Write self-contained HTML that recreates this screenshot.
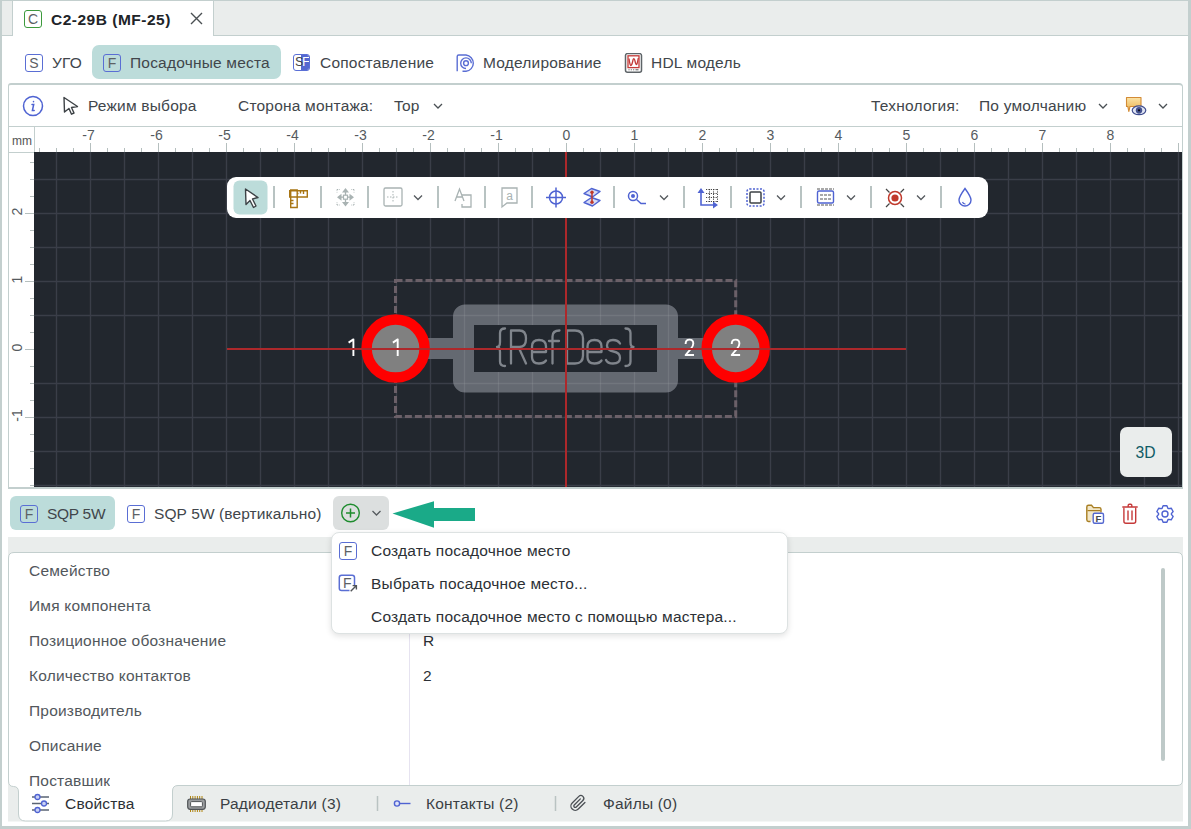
<!DOCTYPE html>
<html><head><meta charset="utf-8">
<style>
*{box-sizing:border-box;margin:0;padding:0}
html,body{width:1191px;height:829px;overflow:hidden;background:#fff}
body{position:relative;font-family:"Liberation Sans",sans-serif;color:#41464b;font-size:15px}
.a{position:absolute}
.t{position:absolute;white-space:nowrap;line-height:1;font-size:15.5px;letter-spacing:0.2px}
.ic{position:absolute;border:1.7px solid #5a6ed4;border-radius:3px;font-size:14px;line-height:14px;text-align:center;color:#5d6165;display:flex;align-items:center;justify-content:center;padding-top:0}
</style></head><body>
<!-- page border -->
<div class="a" style="left:0;top:0;width:1191px;height:829px;border-left:2px solid #c3cfce;border-top:1px solid #c3cfce;border-right:3px solid #c3cfce;border-bottom:3px solid #c3cfce"></div>
<!-- tab strip -->
<div class="a" style="left:2px;top:1px;width:1186px;height:35px;background:#eaedec;border-bottom:1px solid #c3cfce"></div>
<div class="a" style="left:12px;top:1px;width:202px;height:35px;background:#fff;border-left:1px solid #c3cfce;border-right:1px solid #c3cfce"></div>
<div class="ic" style="left:24px;top:10px;width:18px;height:18px;border-color:#3c9a3c">C</div>
<div class="t" style="left:51px;top:12px;font-weight:bold;color:#202428;letter-spacing:0.5px">C2-29B (MF-25)</div>
<svg class="a" style="left:190px;top:12px" width="13" height="13" viewBox="0 0 13 13"><path d="M1 1L12 12M12 1L1 12" stroke="#4a4f52" stroke-width="1.4"/></svg>

<!-- nav row -->
<div class="ic" style="left:25px;top:54px;width:18px;height:18px">S</div>
<div class="t" style="left:52px;top:55px">УГО</div>
<div class="a" style="left:92px;top:45px;width:189px;height:34px;background:#bcdcda;border-radius:7px"></div>
<div class="ic" style="left:103px;top:54px;width:18px;height:18px">F</div>
<div class="t" style="left:130px;top:55px">Посадочные места</div>
<div class="a" style="left:293px;top:54px;width:17px;height:17px;border:1.5px solid #5a6fd6;border-radius:3px;overflow:hidden"><div class="a" style="left:7px;top:0;width:9px;height:15px;background:#5468d0"></div><div class="a" style="left:1px;top:0;font-size:13px;line-height:14px;color:#444">S</div><div class="a" style="left:8px;top:0;font-size:13px;line-height:14px;color:#fff">F</div></div>
<div class="t" style="left:320px;top:55px">Сопоставление</div>
<svg class="a" style="left:455px;top:53px" width="21" height="20" viewBox="0 0 21 20" fill="none" stroke="#5a6ed4" stroke-width="1.4"><path d="M2.2 18.3V3.5Q2.2 2 3.7 2H11a8.2 8.2 0 0 1 0 16.3H7.5"/><path d="M11 15.5a5.3 5.3 0 1 1 5.3 -5.3"/><circle cx="11" cy="10.2" r="2.4"/></svg>
<div class="t" style="left:483px;top:55px">Моделирование</div>
<svg class="a" style="left:623.5px;top:53px" width="19" height="20" viewBox="0 0 19 20"><rect x="1.5" y="0.6" width="16" height="18.6" rx="2" fill="#fff" stroke="#5e6468" stroke-width="1.5"/><rect x="4" y="2.8" width="11" height="11.8" fill="#fff" stroke="#c43a38" stroke-width="1.3"/><path d="M5 5.5Q6 13 7 12.5Q8 12 9 7Q10 4 11 8Q12 13 13 11Q13.8 8 14.3 5" fill="none" stroke="#c43a38" stroke-width="1.3"/><path d="M4.5 16.8h1M6.8 16.8h1M9.2 16.8h1M11.5 16.8h3" stroke="#555" stroke-width="1"/></svg>
<div class="t" style="left:651px;top:55px">HDL модель</div>

<!-- main panel -->
<div class="a" style="left:8px;top:83px;width:1175px;height:406px;border:1px solid #c3cfce;border-top-width:2px;border-bottom-width:2px;border-radius:3px 4px 0 0"></div>
<!-- toolbar row -->
<svg class="a" style="left:22px;top:95px" width="22" height="22" viewBox="0 0 22 22" fill="none" stroke="#4f63d2" stroke-width="1.5"><circle cx="11" cy="11" r="9.5"/><path d="M11.5 6.5v0.3M10 9.5h1.7l-1.3 6h1.8" stroke-linecap="round"/></svg>
<svg class="a" style="left:62px;top:96px" width="18" height="20" viewBox="0 0 18 20"><path d="M2 1.5L15.5 10.5L9.5 11.5L12 17L9.5 18.2L7 12.5L2.5 16Z" fill="#fff" stroke="#3d4246" stroke-width="1.4" stroke-linejoin="round"/></svg>
<div class="t" style="left:88px;top:98px">Режим выбора</div>
<div class="t" style="left:238px;top:98px">Сторона монтажа:</div>
<div class="t" style="left:394px;top:98px">Top</div>
<svg class="a" style="left:433px;top:102px" width="10" height="8" viewBox="0 0 10 8"><path d="M1 2L5 6L9 2" fill="none" stroke="#4a5054" stroke-width="1.3"/></svg>
<div class="t" style="left:871px;top:98px">Технология:</div>
<div class="t" style="left:979px;top:98px">По умолчанию</div>
<svg class="a" style="left:1098px;top:102px" width="10" height="8" viewBox="0 0 10 8"><path d="M1 2L5 6L9 2" fill="none" stroke="#4a5054" stroke-width="1.3"/></svg>
<svg class="a" style="left:1124px;top:96px" width="24" height="20" viewBox="0 0 24 20"><defs><linearGradient id="yg" x1="0" y1="0" x2="0" y2="1"><stop offset="0" stop-color="#fbe3a6"/><stop offset="1" stop-color="#eab04a"/></linearGradient></defs><path d="M2.5 1.5H17V10.5H6L4.8 15.5L3.8 10.5H2.5Z" fill="url(#yg)" stroke="#d38b36" stroke-width="1.1" stroke-linejoin="round"/><ellipse cx="15" cy="14.3" rx="6.8" ry="4.4" fill="#dfe4f3" stroke="#3e4c8e" stroke-width="1.2"/><ellipse cx="15" cy="14.3" rx="3.2" ry="3.4" fill="#44528f"/><circle cx="15" cy="14.3" r="1.1" fill="#0c0c18"/></svg>
<svg class="a" style="left:1157.5px;top:102px" width="10" height="8" viewBox="0 0 10 8"><path d="M1 2L5 6L9 2" fill="none" stroke="#4a5054" stroke-width="1.3"/></svg>

<!-- rulers -->
<svg class="a" style="left:0;top:0" width="1191" height="829">
<line x1="9" y1="126.5" x2="1182" y2="126.5" stroke="#c3cfce" stroke-width="1"/>
<line x1="34.5" y1="126" x2="34.5" y2="488" stroke="#c3cfce" stroke-width="1"/>
<line x1="9" y1="152.5" x2="34" y2="152.5" stroke="#c3cfce" stroke-width="1"/>
<g stroke="#b9c4c3" stroke-width="1">

</g>
<g stroke="#b5bfbe" stroke-width="1">
<line x1="39.5" y1="148" x2="39.5" y2="152"/>
<line x1="56.5" y1="148" x2="56.5" y2="152"/>
<line x1="73.5" y1="148" x2="73.5" y2="152"/>
<line x1="90.5" y1="143" x2="90.5" y2="152"/>
<!-- x="88.5" y="140" text-anchor="middle">-7-->
<line x1="107.5" y1="148" x2="107.5" y2="152"/>
<line x1="124.5" y1="148" x2="124.5" y2="152"/>
<line x1="141.5" y1="148" x2="141.5" y2="152"/>
<line x1="158.5" y1="143" x2="158.5" y2="152"/>
<!-- x="156.5" y="140" text-anchor="middle">-6-->
<line x1="175.5" y1="148" x2="175.5" y2="152"/>
<line x1="192.5" y1="148" x2="192.5" y2="152"/>
<line x1="209.5" y1="148" x2="209.5" y2="152"/>
<line x1="226.5" y1="143" x2="226.5" y2="152"/>
<!-- x="224.5" y="140" text-anchor="middle">-5-->
<line x1="243.5" y1="148" x2="243.5" y2="152"/>
<line x1="260.5" y1="148" x2="260.5" y2="152"/>
<line x1="277.5" y1="148" x2="277.5" y2="152"/>
<line x1="294.5" y1="143" x2="294.5" y2="152"/>
<!-- x="292.5" y="140" text-anchor="middle">-4-->
<line x1="311.5" y1="148" x2="311.5" y2="152"/>
<line x1="328.5" y1="148" x2="328.5" y2="152"/>
<line x1="345.5" y1="148" x2="345.5" y2="152"/>
<line x1="362.5" y1="143" x2="362.5" y2="152"/>
<!-- x="360.5" y="140" text-anchor="middle">-3-->
<line x1="379.5" y1="148" x2="379.5" y2="152"/>
<line x1="396.5" y1="148" x2="396.5" y2="152"/>
<line x1="413.5" y1="148" x2="413.5" y2="152"/>
<line x1="430.5" y1="143" x2="430.5" y2="152"/>
<!-- x="428.5" y="140" text-anchor="middle">-2-->
<line x1="447.5" y1="148" x2="447.5" y2="152"/>
<line x1="464.5" y1="148" x2="464.5" y2="152"/>
<line x1="481.5" y1="148" x2="481.5" y2="152"/>
<line x1="498.5" y1="143" x2="498.5" y2="152"/>
<!-- x="496.5" y="140" text-anchor="middle">-1-->
<line x1="515.5" y1="148" x2="515.5" y2="152"/>
<line x1="532.5" y1="148" x2="532.5" y2="152"/>
<line x1="549.5" y1="148" x2="549.5" y2="152"/>
<line x1="566.5" y1="143" x2="566.5" y2="152"/>
<!-- x="566.5" y="140" text-anchor="middle">0-->
<line x1="583.5" y1="148" x2="583.5" y2="152"/>
<line x1="600.5" y1="148" x2="600.5" y2="152"/>
<line x1="617.5" y1="148" x2="617.5" y2="152"/>
<line x1="634.5" y1="143" x2="634.5" y2="152"/>
<!-- x="634.5" y="140" text-anchor="middle">1-->
<line x1="651.5" y1="148" x2="651.5" y2="152"/>
<line x1="668.5" y1="148" x2="668.5" y2="152"/>
<line x1="685.5" y1="148" x2="685.5" y2="152"/>
<line x1="702.5" y1="143" x2="702.5" y2="152"/>
<!-- x="702.5" y="140" text-anchor="middle">2-->
<line x1="719.5" y1="148" x2="719.5" y2="152"/>
<line x1="736.5" y1="148" x2="736.5" y2="152"/>
<line x1="753.5" y1="148" x2="753.5" y2="152"/>
<line x1="770.5" y1="143" x2="770.5" y2="152"/>
<!-- x="770.5" y="140" text-anchor="middle">3-->
<line x1="787.5" y1="148" x2="787.5" y2="152"/>
<line x1="804.5" y1="148" x2="804.5" y2="152"/>
<line x1="821.5" y1="148" x2="821.5" y2="152"/>
<line x1="838.5" y1="143" x2="838.5" y2="152"/>
<!-- x="838.5" y="140" text-anchor="middle">4-->
<line x1="855.5" y1="148" x2="855.5" y2="152"/>
<line x1="872.5" y1="148" x2="872.5" y2="152"/>
<line x1="889.5" y1="148" x2="889.5" y2="152"/>
<line x1="906.5" y1="143" x2="906.5" y2="152"/>
<!-- x="906.5" y="140" text-anchor="middle">5-->
<line x1="923.5" y1="148" x2="923.5" y2="152"/>
<line x1="940.5" y1="148" x2="940.5" y2="152"/>
<line x1="957.5" y1="148" x2="957.5" y2="152"/>
<line x1="974.5" y1="143" x2="974.5" y2="152"/>
<!-- x="974.5" y="140" text-anchor="middle">6-->
<line x1="991.5" y1="148" x2="991.5" y2="152"/>
<line x1="1008.5" y1="148" x2="1008.5" y2="152"/>
<line x1="1025.5" y1="148" x2="1025.5" y2="152"/>
<line x1="1042.5" y1="143" x2="1042.5" y2="152"/>
<!-- x="1042.5" y="140" text-anchor="middle">7-->
<line x1="1059.5" y1="148" x2="1059.5" y2="152"/>
<line x1="1076.5" y1="148" x2="1076.5" y2="152"/>
<line x1="1093.5" y1="148" x2="1093.5" y2="152"/>
<line x1="1110.5" y1="143" x2="1110.5" y2="152"/>
<!-- x="1110.5" y="140" text-anchor="middle">8-->
<line x1="1127.5" y1="148" x2="1127.5" y2="152"/>
<line x1="1144.5" y1="148" x2="1144.5" y2="152"/>
<line x1="1161.5" y1="148" x2="1161.5" y2="152"/>
<line x1="1178.5" y1="143" x2="1178.5" y2="152"/>
<line x1="30" y1="162.5" x2="34" y2="162.5"/>
<line x1="30" y1="179.5" x2="34" y2="179.5"/>
<line x1="30" y1="196.5" x2="34" y2="196.5"/>
<line x1="25" y1="213.5" x2="34" y2="213.5"/>
<!-- transform="translate(22,211.5) rotate(-90)" text-anchor="middle">2-->
<line x1="30" y1="230.5" x2="34" y2="230.5"/>
<line x1="30" y1="247.5" x2="34" y2="247.5"/>
<line x1="30" y1="264.5" x2="34" y2="264.5"/>
<line x1="25" y1="281.5" x2="34" y2="281.5"/>
<!-- transform="translate(22,279.5) rotate(-90)" text-anchor="middle">1-->
<line x1="30" y1="298.5" x2="34" y2="298.5"/>
<line x1="30" y1="315.5" x2="34" y2="315.5"/>
<line x1="30" y1="332.5" x2="34" y2="332.5"/>
<line x1="25" y1="349.5" x2="34" y2="349.5"/>
<!-- transform="translate(22,347.5) rotate(-90)" text-anchor="middle">0-->
<line x1="30" y1="366.5" x2="34" y2="366.5"/>
<line x1="30" y1="383.5" x2="34" y2="383.5"/>
<line x1="30" y1="400.5" x2="34" y2="400.5"/>
<line x1="25" y1="417.5" x2="34" y2="417.5"/>
<!-- transform="translate(22,415.5) rotate(-90)" text-anchor="middle">-1-->
<line x1="30" y1="434.5" x2="34" y2="434.5"/>
<line x1="30" y1="451.5" x2="34" y2="451.5"/>
<line x1="30" y1="468.5" x2="34" y2="468.5"/>
<line x1="30" y1="485.5" x2="34" y2="485.5"/>
</g>
<g font-family="Liberation Sans" font-size="14" fill="#555a5e" stroke="none">
<text x="88.5" y="140" text-anchor="middle">-7</text><text x="156.5" y="140" text-anchor="middle">-6</text><text x="224.5" y="140" text-anchor="middle">-5</text><text x="292.5" y="140" text-anchor="middle">-4</text><text x="360.5" y="140" text-anchor="middle">-3</text><text x="428.5" y="140" text-anchor="middle">-2</text><text x="496.5" y="140" text-anchor="middle">-1</text><text x="566.5" y="140" text-anchor="middle">0</text><text x="634.5" y="140" text-anchor="middle">1</text><text x="702.5" y="140" text-anchor="middle">2</text><text x="770.5" y="140" text-anchor="middle">3</text><text x="838.5" y="140" text-anchor="middle">4</text><text x="906.5" y="140" text-anchor="middle">5</text><text x="974.5" y="140" text-anchor="middle">6</text><text x="1042.5" y="140" text-anchor="middle">7</text><text x="1110.5" y="140" text-anchor="middle">8</text>
<text transform="translate(22,211.5) rotate(-90)" text-anchor="middle">2</text><text transform="translate(22,279.5) rotate(-90)" text-anchor="middle">1</text><text transform="translate(22,347.5) rotate(-90)" text-anchor="middle">0</text><text transform="translate(22,415.5) rotate(-90)" text-anchor="middle">-1</text>
</g>
<text x="12" y="145" font-family="Liberation Sans" font-size="12" fill="#555">mm</text>
<rect x="34" y="152" width="1148" height="335" fill="#22272e"/>
<g stroke="#3a3e48" stroke-width="1.4">
<line x1="56.5" y1="152" x2="56.5" y2="487"/>
<line x1="90.5" y1="152" x2="90.5" y2="487"/>
<line x1="124.5" y1="152" x2="124.5" y2="487"/>
<line x1="158.5" y1="152" x2="158.5" y2="487"/>
<line x1="192.5" y1="152" x2="192.5" y2="487"/>
<line x1="226.5" y1="152" x2="226.5" y2="487"/>
<line x1="260.5" y1="152" x2="260.5" y2="487"/>
<line x1="294.5" y1="152" x2="294.5" y2="487"/>
<line x1="328.5" y1="152" x2="328.5" y2="487"/>
<line x1="362.5" y1="152" x2="362.5" y2="487"/>
<line x1="396.5" y1="152" x2="396.5" y2="487"/>
<line x1="430.5" y1="152" x2="430.5" y2="487"/>
<line x1="464.5" y1="152" x2="464.5" y2="487"/>
<line x1="498.5" y1="152" x2="498.5" y2="487"/>
<line x1="532.5" y1="152" x2="532.5" y2="487"/>
<line x1="600.5" y1="152" x2="600.5" y2="487"/>
<line x1="634.5" y1="152" x2="634.5" y2="487"/>
<line x1="668.5" y1="152" x2="668.5" y2="487"/>
<line x1="702.5" y1="152" x2="702.5" y2="487"/>
<line x1="736.5" y1="152" x2="736.5" y2="487"/>
<line x1="770.5" y1="152" x2="770.5" y2="487"/>
<line x1="804.5" y1="152" x2="804.5" y2="487"/>
<line x1="838.5" y1="152" x2="838.5" y2="487"/>
<line x1="872.5" y1="152" x2="872.5" y2="487"/>
<line x1="906.5" y1="152" x2="906.5" y2="487"/>
<line x1="940.5" y1="152" x2="940.5" y2="487"/>
<line x1="974.5" y1="152" x2="974.5" y2="487"/>
<line x1="1008.5" y1="152" x2="1008.5" y2="487"/>
<line x1="1042.5" y1="152" x2="1042.5" y2="487"/>
<line x1="1076.5" y1="152" x2="1076.5" y2="487"/>
<line x1="1110.5" y1="152" x2="1110.5" y2="487"/>
<line x1="1144.5" y1="152" x2="1144.5" y2="487"/>
<line x1="1178.5" y1="152" x2="1178.5" y2="487"/>
<line x1="34" y1="179.5" x2="1182" y2="179.5"/>
<line x1="34" y1="213.5" x2="1182" y2="213.5"/>
<line x1="34" y1="247.5" x2="1182" y2="247.5"/>
<line x1="34" y1="281.5" x2="1182" y2="281.5"/>
<line x1="34" y1="315.5" x2="1182" y2="315.5"/>
<line x1="34" y1="383.5" x2="1182" y2="383.5"/>
<line x1="34" y1="417.5" x2="1182" y2="417.5"/>
<line x1="34" y1="451.5" x2="1182" y2="451.5"/>
<line x1="34" y1="485.5" x2="1182" y2="485.5"/>
</g>
<line x1="566" y1="152" x2="566" y2="487" stroke="#c0292b" stroke-width="2"/>
<line x1="227" y1="349" x2="906" y2="349" stroke="#c0292b" stroke-width="2"/>
</svg>

<!-- canvas content -->
<svg class="a" style="left:0;top:0" width="1191" height="829">
<defs><clipPath id="cv"><rect x="34" y="152" width="1148" height="335"/></clipPath></defs>
<g clip-path="url(#cv)">
<rect x="395.5" y="280.5" width="340.2" height="136" fill="none" stroke="#6b6068" stroke-width="3" stroke-dasharray="7 3" stroke-linecap="butt"/>
<path fill-rule="evenodd" fill="#6a6f77" fill-opacity="0.92" d="M465 304.5H666a12 12 0 0 1 12 12V380.5a12 12 0 0 1 -12 12H465a12 12 0 0 1 -12 -12V316.5a12 12 0 0 1 12 -12Z M474 325V372H657V325Z"/>
<rect x="474" y="325" width="183" height="47" fill="#22272e"/>
<clipPath id="bc"><path clip-rule="evenodd" d="M465 304.5H666a12 12 0 0 1 12 12V380.5a12 12 0 0 1 -12 12H465a12 12 0 0 1 -12 -12V316.5a12 12 0 0 1 12 -12Z M474 325V372H657V325Z"/><rect x="420" y="338" width="33" height="21"/><rect x="678" y="338" width="33" height="21"/></clipPath>
<g clip-path="url(#bc)" stroke="#fff" stroke-opacity="0.075" stroke-width="1.3"><line x1="56.5" y1="152" x2="56.5" y2="487"/>
<line x1="90.5" y1="152" x2="90.5" y2="487"/>
<line x1="124.5" y1="152" x2="124.5" y2="487"/>
<line x1="158.5" y1="152" x2="158.5" y2="487"/>
<line x1="192.5" y1="152" x2="192.5" y2="487"/>
<line x1="226.5" y1="152" x2="226.5" y2="487"/>
<line x1="260.5" y1="152" x2="260.5" y2="487"/>
<line x1="294.5" y1="152" x2="294.5" y2="487"/>
<line x1="328.5" y1="152" x2="328.5" y2="487"/>
<line x1="362.5" y1="152" x2="362.5" y2="487"/>
<line x1="396.5" y1="152" x2="396.5" y2="487"/>
<line x1="430.5" y1="152" x2="430.5" y2="487"/>
<line x1="464.5" y1="152" x2="464.5" y2="487"/>
<line x1="498.5" y1="152" x2="498.5" y2="487"/>
<line x1="532.5" y1="152" x2="532.5" y2="487"/>
<line x1="600.5" y1="152" x2="600.5" y2="487"/>
<line x1="634.5" y1="152" x2="634.5" y2="487"/>
<line x1="668.5" y1="152" x2="668.5" y2="487"/>
<line x1="702.5" y1="152" x2="702.5" y2="487"/>
<line x1="736.5" y1="152" x2="736.5" y2="487"/>
<line x1="770.5" y1="152" x2="770.5" y2="487"/>
<line x1="804.5" y1="152" x2="804.5" y2="487"/>
<line x1="838.5" y1="152" x2="838.5" y2="487"/>
<line x1="872.5" y1="152" x2="872.5" y2="487"/>
<line x1="906.5" y1="152" x2="906.5" y2="487"/>
<line x1="940.5" y1="152" x2="940.5" y2="487"/>
<line x1="974.5" y1="152" x2="974.5" y2="487"/>
<line x1="1008.5" y1="152" x2="1008.5" y2="487"/>
<line x1="1042.5" y1="152" x2="1042.5" y2="487"/>
<line x1="1076.5" y1="152" x2="1076.5" y2="487"/>
<line x1="1110.5" y1="152" x2="1110.5" y2="487"/>
<line x1="1144.5" y1="152" x2="1144.5" y2="487"/>
<line x1="1178.5" y1="152" x2="1178.5" y2="487"/>
<line x1="34" y1="179.5" x2="1182" y2="179.5"/>
<line x1="34" y1="213.5" x2="1182" y2="213.5"/>
<line x1="34" y1="247.5" x2="1182" y2="247.5"/>
<line x1="34" y1="281.5" x2="1182" y2="281.5"/>
<line x1="34" y1="315.5" x2="1182" y2="315.5"/>
<line x1="34" y1="383.5" x2="1182" y2="383.5"/>
<line x1="34" y1="417.5" x2="1182" y2="417.5"/>
<line x1="34" y1="451.5" x2="1182" y2="451.5"/>
<line x1="34" y1="485.5" x2="1182" y2="485.5"/></g>
<rect x="420" y="338" width="33" height="21" fill="#6a6f77" fill-opacity="0.92"/>
<rect x="678" y="338" width="33" height="21" fill="#6a6f77" fill-opacity="0.92"/>
<circle cx="395.6" cy="348.6" r="29" fill="#808080" stroke="#ff0000" stroke-width="10.5"/>
<circle cx="735.7" cy="348.5" r="29" fill="#808080" stroke="#ff0000" stroke-width="10.5"/>
<g fill="none" stroke="#80858c" stroke-width="2.3" stroke-linecap="round" stroke-linejoin="round">
<path d="M505 328.5Q500 328.5 500 333V342Q500 347 497 347Q500 347 500 352V361.5Q500 366 505 366"/>
<path d="M511 363.5V330.5H519.5Q526 330.5 526 338.8Q526 347 519.5 347H511M518.5 347L526 363.5"/>
<path d="M532 352H546V346.5Q546 340 539 340Q532 340 532 346.5V357Q532 363.5 539 363.5Q544 363.5 546 360.5"/>
<path d="M559.5 330.5Q552.5 330.5 552.5 336.5V363.5M549 341H559"/>
<path d="M567 330.5V363.5H575Q583 363.5 583 355.5V338.5Q583 330.5 575 330.5Z"/>
<path d="M587.5 352H601.5V346.5Q601.5 340 594.5 340Q587.5 340 587.5 346.5V357Q587.5 363.5 594.5 363.5Q599.5 363.5 601.5 360.5"/>
<path d="M620 343.5Q618 340 613 340Q607 340 607 345.5Q607 350.5 613.5 351.5Q620 352.5 620 358Q620 363.5 613 363.5Q607.5 363.5 606 360"/>
<path d="M625.5 328.5Q630.5 328.5 630.5 333V342Q630.5 347 633.5 347Q630.5 347 630.5 352V361.5Q630.5 366 625.5 366"/>
</g>
<g fill="none" stroke="#fff" stroke-width="1.9" stroke-linejoin="round">
<path d="M348.6 342.6L353.4 339.4V356"/>
<path d="M392.9 342.6L397.7 339.4V356"/>
<path d="M685.6 344Q685.6 339.6 689.5 339.6Q693.3 339.6 693.3 343.6Q693.3 346 691 348.6L685.6 355H694"/>
<path d="M731.7 344Q731.7 339.6 735.6 339.6Q739.4 339.6 739.4 343.6Q739.4 346 737.1 348.6L731.7 355H740.1"/>
</g>
<line x1="566" y1="152" x2="566" y2="487" stroke="#ad282b" stroke-width="2"/>
<line x1="227" y1="349" x2="906" y2="349" stroke="#ad282b" stroke-width="2"/>
</g>
<!-- floating toolbar -->
<rect x="227" y="177" width="761" height="41" rx="9" fill="#fff"/>
<rect x="233.5" y="180.5" width="34" height="34" rx="6" fill="#bcdcda"/>
<g stroke="#b8c3c2" stroke-width="2">
<line x1="274" y1="186" x2="274" y2="208"/><line x1="321" y1="186" x2="321" y2="208"/><line x1="368" y1="186" x2="368" y2="208"/>
<line x1="438" y1="186" x2="438" y2="208"/><line x1="485" y1="186" x2="485" y2="208"/><line x1="532" y1="186" x2="532" y2="208"/>
<line x1="614" y1="186" x2="614" y2="208"/><line x1="684" y1="186" x2="684" y2="208"/><line x1="731" y1="186" x2="731" y2="208"/>
<line x1="801" y1="186" x2="801" y2="208"/><line x1="871" y1="186" x2="871" y2="208"/><line x1="941" y1="186" x2="941" y2="208"/>
</g>
<!-- select arrow -->
<path d="M245.5 189L258 197.5L252.5 199L256 206L253.5 207.5L250 200.5L246 204.5Z" fill="#fff" stroke="#3d4246" stroke-width="1.4" stroke-linejoin="round"/>
<!-- ruler icon -->
<g fill="none" stroke="#a87514" stroke-width="1.4"><path d="M289.7 190.7h17.6v6.3h-17.6z"/><path d="M290.7 190v17.5h6.5V190z"/><path d="M300.5 191v2.5M303.5 191v3M297.5 193.5h1M291 200.5h2.5M291 203.5h2.5M294.5 197v0"/></g>
<!-- move icon -->
<g fill="#a9b3b3"><path d="M345.5 188l3.5 4.5h-7zM345.5 206.5l3.5 -4.5h-7zM337 197.2l4.5 -3.5v7zM354 197.2l-4.5 -3.5v7z"/><path d="M345.5 192v10.5M341 197.2h9" stroke="#a9b3b3" stroke-width="1.3"/><rect x="343.5" y="195.2" width="4" height="4" fill="#fff" stroke="#a9b3b3" stroke-width="1.2"/></g>
<g stroke="#a9b3b3" stroke-width="1" stroke-dasharray="1.2 1.2"><path d="M337 189.5h3M337 189.5v3M354 189.5h-3M354 189.5v3M337 205h3M337 205v-3M354 205h-3M354 205v-3"/></g>
<!-- grid box icon -->
<rect x="384" y="188" width="18" height="18" rx="1.5" fill="none" stroke="#a9b3b3" stroke-width="1.3"/>
<path d="M393 191v12M387 197h12" stroke="#a9b3b3" stroke-width="1" stroke-dasharray="1.5 1.5"/>
<path d="M414 195.5l4 4l4 -4" fill="none" stroke="#555a5e" stroke-width="1.3"/>
<!-- text icon -->
<g fill="none" stroke="#a9b3b3" stroke-width="1.3"><path d="M455 201l4.5 -12l4.5 12M456.5 197h6"/><path d="M462 195h9v12h-9v-3"/></g>
<!-- attribute icon -->
<g fill="none" stroke="#a9b3b3" stroke-width="1.3"><path d="M502 188h15v15h-10l-5 4z"/></g>
<text x="509.5" y="200" font-family="Liberation Sans" font-size="12" fill="#a9b3b3" text-anchor="middle">a</text>
<!-- target icon -->
<g fill="none" stroke="#4f63d2" stroke-width="1.5"><circle cx="556" cy="197.5" r="6.5"/><path d="M546 197.5h20M556 187.5v20"/></g>
<!-- snap icon -->
<g fill="#d5dbf6" stroke="#4f63d2" stroke-width="1.4" stroke-linejoin="round"><path d="M584 193.5L591.5 188.5L600 191.5L592.5 197Z"/><path d="M584 202.5L591.5 197.5L600 200.5L592.5 206Z"/></g>
<path d="M592 192v10.5" stroke="#c0392b" stroke-width="1.5"/><circle cx="592" cy="192.2" r="1.7" fill="#c0392b"/><circle cx="592" cy="202.3" r="1.7" fill="#c0392b"/>
<!-- route icon -->
<g fill="none" stroke="#4f63d2" stroke-width="1.5"><circle cx="633" cy="196" r="4.5"/><path d="M636.5 199.5l4.5 4h5"/></g><circle cx="633" cy="196" r="2" fill="#4f63d2"/>
<path d="M660 195.5l4 4l4 -4" fill="none" stroke="#555a5e" stroke-width="1.3"/>
<!-- origin icon -->
<g fill="none" stroke="#4f63d2" stroke-width="1.6"><path d="M701 192v13h14"/></g>
<path d="M701 188l-3.5 5h7zM718 205l-5 -3.5v7z" fill="#4f63d2"/>
<g stroke="#333" stroke-width="0.9" stroke-dasharray="1.2 1.2" fill="none"><path d="M706 189.5h11M706 193.5h11M706 197.5h11M706 201.5h11M709.5 189v13M713.5 189v13M717.5 189v13"/></g>
<!-- select box icon -->
<rect x="747" y="189" width="17" height="17" rx="2.5" fill="none" stroke="#4f63d2" stroke-width="1.5" stroke-dasharray="2 1.5"/>
<rect x="750" y="192" width="11" height="11" rx="1" fill="none" stroke="#3d4246" stroke-width="1.5"/>
<path d="M777 195.5l4 4l4 -4" fill="none" stroke="#555a5e" stroke-width="1.3"/>
<!-- layers icon -->
<rect x="817.5" y="191" width="16" height="12" rx="1.5" fill="none" stroke="#4f63d2" stroke-width="1.4"/>
<g stroke="#555" stroke-width="1.2"><path d="M817 189h17M817 205h17M820 195h11M820 199h11" stroke-dasharray="3 1"/></g>
<path d="M847 195.5l4 4l4 -4" fill="none" stroke="#555a5e" stroke-width="1.3"/>
<!-- drc icon -->
<circle cx="895" cy="198" r="6.5" fill="none" stroke="#c0392b" stroke-width="1.5"/><circle cx="895" cy="198" r="3.6" fill="#c0392b"/>
<path d="M886 189l3.5 3.5M904 189l-3.5 3.5M886 207l3.5 -3.5M904 207l-3.5 -3.5" stroke="#444" stroke-width="1.2"/>
<path d="M917 195.5l4 4l4 -4" fill="none" stroke="#555a5e" stroke-width="1.3"/>
<!-- drop icon -->
<path d="M965 188.5C961 194 959 197 959 200a6 6 0 0 0 12 0C971 197 969 194 965 188.5Z" fill="none" stroke="#4f63d2" stroke-width="1.4"/>
<path d="M962.5 202a3 3 0 0 0 3 2" fill="none" stroke="#4f63d2" stroke-width="1.2"/>
<!-- 3D button -->
<rect x="1120" y="427" width="52" height="50" rx="7" fill="#eaedec"/>
<text x="1145.5" y="458" font-family="Liberation Sans" font-size="15.7" fill="#0f5c66" text-anchor="middle">3D</text>
</svg>

<!-- footprint row -->
<div class="a" style="left:10px;top:496px;width:105px;height:34px;background:#bcdcda;border-radius:6px"></div>
<div class="ic" style="left:20px;top:505px;width:18px;height:18px">F</div>
<div class="t" style="left:47px;top:506px;letter-spacing:-0.3px">SQP 5W</div>
<div class="ic" style="left:127px;top:505px;width:18px;height:18px">F</div>
<div class="t" style="left:154px;top:506px;letter-spacing:0.1px">SQP 5W (вертикально)</div>
<div class="a" style="left:333px;top:496px;width:56px;height:34px;background:#dcdfdf;border-radius:6px"></div>
<svg class="a" style="left:0;top:0" width="1191" height="829">
<circle cx="350.5" cy="513" r="8.8" fill="none" stroke="#1e8c2e" stroke-width="1.4"/>
<path d="M346 513h9M350.5 508.5v9" stroke="#1e8c2e" stroke-width="1.5"/>
<path d="M372.5 511l4 4l4 -4" fill="none" stroke="#555a5e" stroke-width="1.3"/>
<path d="M392.5 513.5L434 501.2V508H475V521H434V527.7Z" fill="#1aaa88"/>
<!-- right icons -->
<path d="M1090.5 521.5H1088.5Q1086.8 521.5 1086.8 519.8V507Q1086.8 505.3 1088.5 505.3H1091.5L1093.5 507.6H1099.3Q1101 507.6 1101 509.3V512.5" fill="#f2e7c8" stroke="#a87e22" stroke-width="1.4"/>
<path d="M1087.5 510.6H1100.5" stroke="#a87e22" stroke-width="1.2"/>
<rect x="1093.2" y="513.3" width="10.3" height="10" rx="1.5" fill="#fff" stroke="#5468d0" stroke-width="1.4"/>
<text x="1098.4" y="521.8" font-family="Liberation Sans" font-size="9.5" font-weight="bold" fill="#454a4e" text-anchor="middle">F</text>
<g fill="none" stroke="#c63a3a" stroke-width="1.4" stroke-linecap="round"><path d="M1122.8 507H1137.2M1128.2 506.8V505.3Q1128.2 504.2 1129.3 504.2H1130.7Q1131.8 504.2 1131.8 505.3V506.8M1123.9 508.5V521.3Q1123.9 523.3 1125.9 523.3H1133.7Q1135.7 523.3 1135.7 521.3V508.5M1128 511v8.8M1132 511v8.8"/></g>
<g fill="none" stroke="#4f63d2" stroke-width="1.4" stroke-linejoin="round"><circle cx="1165" cy="514" r="3"/><path d="M1162.09 508.30 L1163.09 505.72 L1166.91 505.72 L1167.91 508.30 L1168.49 508.63 L1171.22 508.20 L1173.13 511.51 L1171.39 513.67 L1171.39 514.33 L1173.13 516.49 L1171.22 519.80 L1168.49 519.37 L1167.91 519.70 L1166.91 522.28 L1163.09 522.28 L1162.09 519.70 L1161.51 519.37 L1158.78 519.80 L1156.87 516.49 L1158.61 514.33 L1158.61 513.67 L1156.87 511.51 L1158.78 508.20 L1161.51 508.63Z"/></g>
</svg>
<!-- gray band + card + bottom tabs -->
<svg class="a" style="left:0;top:0" width="1191" height="829">
<rect x="8" y="537" width="1175" height="284.5" fill="#eaedec"/>
<path d="M8.5 558Q8.5 552.5 14 552.5H1177Q1182.5 552.5 1182.5 558V780Q1182.5 785.5 1177 785.5H178Q172.5 785.5 172.5 791V814Q172.5 821 165.5 821H25.5Q18.5 821 18.5 814V792Q18.5 786.5 13.5 786.5Q8.5 786.5 8.5 781Z" fill="#fff" stroke="#c3cfce" stroke-width="1"/>
</svg>
<div class="a" style="left:409px;top:553px;width:1px;height:232px;background:#e6e3f0"></div>
<div class="a" style="left:1161px;top:568px;width:4px;height:193px;background:#bec9c8;border-radius:2px"></div>
<div class="t" style="left:29px;top:563px;color:#52575c">Семейство</div>
<div class="t" style="left:29px;top:598px;color:#52575c">Имя компонента</div>
<div class="t" style="left:29px;top:633px;color:#52575c">Позиционное обозначение</div>
<div class="t" style="left:29px;top:668px;color:#52575c">Количество контактов</div>
<div class="t" style="left:29px;top:703px;color:#52575c">Производитель</div>
<div class="t" style="left:29px;top:738px;color:#52575c">Описание</div>
<div class="t" style="left:29px;top:773px;color:#52575c;height:13px;overflow:hidden;line-height:15.7px">Поставщик</div>
<div class="t" style="left:423px;top:633px;color:#2c3035">R</div>
<div class="t" style="left:423px;top:668px;color:#2c3035">2</div>
<!-- bottom tab strip -->

<svg class="a" style="left:0;top:0" width="1191" height="829">
<g fill="none" stroke="#5a6474" stroke-width="1.3"><path d="M32 797h17M32 803.5h17M32 810h17"/></g>
<g fill="#c9d1f6" stroke="#4f63d2" stroke-width="1.3"><circle cx="37.5" cy="797" r="2.5"/><circle cx="44" cy="803.5" r="2.5"/><circle cx="37.5" cy="810" r="2.5"/></g>
<path d="M190.5 796v3M192.8 796v3M195.1 796v3M197.4 796v3M199.7 796v3M202 796v3M190.5 809v3M192.8 809v3M195.1 809v3M197.4 809v3M199.7 809v3M202 809v3" stroke="#b0840e" stroke-width="1"/>
<rect x="187.7" y="799" width="17.6" height="10.3" rx="2.5" fill="#9a9d9f" stroke="#505457" stroke-width="1.2"/>
<rect x="190.6" y="801.6" width="11.8" height="5.2" rx="1" fill="#fff" stroke="#505457" stroke-width="1"/>
<line x1="377.5" y1="796" x2="377.5" y2="811" stroke="#b9c3c2" stroke-width="1.5"/>
<circle cx="397" cy="803.5" r="2.6" fill="#dfe3f8" stroke="#4f63d2" stroke-width="1.4"/>
<line x1="399.6" y1="803.5" x2="410.5" y2="803.5" stroke="#4f63d2" stroke-width="1.4"/>
<line x1="555.5" y1="796" x2="555.5" y2="811" stroke="#b9c3c2" stroke-width="1.5"/>
<g transform="translate(569.5 794.5) scale(0.72)"><path d="M21.44 11.05l-9.19 9.19a6 6 0 0 1-8.49-8.49l9.19-9.19a4 4 0 0 1 5.66 5.66l-9.2 9.19a2 2 0 0 1-2.83-2.83l8.49-8.48" fill="none" stroke="#4a4f54" stroke-width="1.8" stroke-linecap="round" stroke-linejoin="round"/></g>
</svg>
<div class="t" style="left:65px;top:796px;color:#2c3035">Свойства</div>
<div class="t" style="left:220px;top:796px;color:#3a3f44">Радиодетали (3)</div>
<div class="t" style="left:426px;top:796px;color:#3a3f44">Контакты (2)</div>
<div class="t" style="left:603px;top:796px;color:#3a3f44">Файлы (0)</div>

<!-- popup -->
<div class="a" style="left:331px;top:532px;width:457px;height:102px;background:#fff;border:1px solid #dde2e2;border-radius:8px;box-shadow:0 2px 6px rgba(0,0,0,0.12)"></div>
<div class="ic" style="left:339px;top:541.5px;width:18px;height:18px">F</div>
<div class="t" style="left:371px;top:543px;color:#2c3035">Создать посадочное место</div>
<div class="ic" style="left:339px;top:574.5px;width:16.5px;height:16px;border-color:transparent">F</div>
<svg class="a" style="left:338px;top:573px" width="24" height="24" viewBox="0 0 24 24"><path d="M16.5 12.5V4.5Q16.5 2.2 14.2 2.2H3.6Q1.3 2.2 1.3 4.5V15.3Q1.3 17.6 3.6 17.6H11.5" stroke="#5a6ed4" stroke-width="1.5" fill="none"/><path d="M12.7 18.3L18.2 12.8M14.6 12.6h3.8v3.8" fill="none" stroke="#505458" stroke-width="1.4"/></svg>
<div class="t" style="left:371px;top:576px;color:#2c3035">Выбрать посадочное место...</div>
<div class="t" style="left:371px;top:609px;color:#2c3035">Создать посадочное место с помощью мастера...</div>
</body></html>
